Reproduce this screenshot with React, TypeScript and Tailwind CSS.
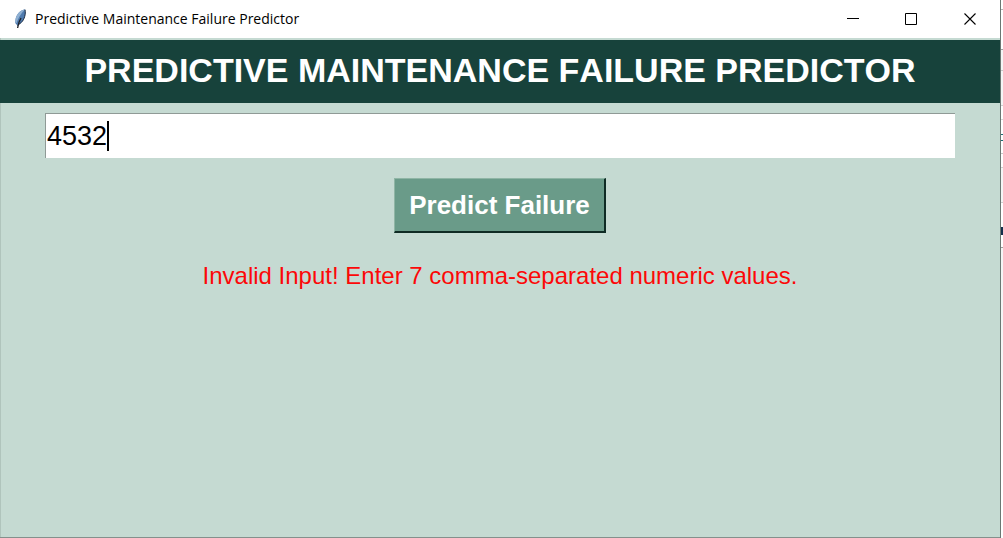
import { useState } from "react";

function FeatherIcon() {
  return (
    <svg width="13" height="20" viewBox="0 0 13 20" aria-hidden="true">
      <path d="M11 .6C7.200.6 3.200 4.400 1.800 9L1 13.800l2.600 3L7.400 13.400C10.800 10.400 12 5 11 .6Z" fill="#4f7baf" />
      <path d="M11 .6C7.200.6 3.200 4.400 1.800 9L1 13.800l1.600.2C4 9.600 7 4.400 11 .6Z" fill="#8fb0d2" />
      <path d="M11 .6c1 4.400-.6 9.800-3.600 12.800l-3.800 3" fill="none" stroke="#1b2a40" strokeWidth="1" />
      <path d="M7 9C5.400 11.600 4.400 14 3.600 19" fill="none" stroke="#1f2228" strokeWidth="1.400" />
    </svg>
  );
}

function TitleBar() {
  return (
    <div className="flex h-[38px] items-center justify-between bg-white">
      <div className="flex items-center gap-2 pl-[14px]">
        <FeatherIcon />
        <span className="font-['Open_Sans',sans-serif] text-sm text-black">
          Predictive Maintenance Failure Predictor
        </span>
      </div>
      <div className="flex h-full">
        <button type="button" aria-label="Minimize" className="flex w-[58px] items-center justify-center">
          <svg width="12" height="12" viewBox="0 0 12 12">
            <path d="M0 5.500h12" stroke="#000" />
          </svg>
        </button>
        <button type="button" aria-label="Maximize" className="flex w-[58px] items-center justify-center">
          <svg width="12" height="12" viewBox="0 0 12 12">
            <path d="M.5.5h11v11H.5z" fill="none" stroke="#000" />
          </svg>
        </button>
        <button type="button" aria-label="Close" className="flex w-[60px] items-center justify-center">
          <svg width="12" height="12" viewBox="0 0 12 12">
            <path d="M.5.5l11 11M11.500.5l-11 11" stroke="#000" strokeWidth="1.100" />
          </svg>
        </button>
      </div>
    </div>
  );
}

/* Sliver of the spreadsheet window that shows behind the right edge. */
function BackgroundSliver() {
  return (
    <div aria-hidden="true" className="flex w-[2px] shrink-0 flex-col bg-white">
      <div className="h-[10px] border-b border-[#b4b4b4]" />
      <div className="h-10 border-b border-[#a0a0a0]" />
      <div className="h-[21px] border-b border-[#c8c8c8] bg-[#f5f5f5]" />
      <div className="h-[35px] border-b border-[#d0d0d0] bg-[#f5f5f5]" />
      <div className="h-[14px] border-b border-[#d8d8d8]" />
      <div className="h-[15px] border-b border-[#1d6d75]" />
      <div className="h-[6px] border-b border-[#1d6d75]" />
      <div className="h-[13px] border-b border-[#c8c8c8]" />
      <div className="h-[14px] border-b border-[#d0d0d0]" />
      <div className="h-[35px] border-b border-[#d0d0d0] bg-[#f5f5f5]" />
      <div className="mt-6 h-2 bg-[#14304d]" />
      <div className="h-[13px] border-b border-[#a0a0a0]" />
      <div className="h-[152px] bg-[#f5f5f5]" />
    </div>
  );
}

export default function App() {
  const [value, setValue] = useState("4532");

  return (
    <div className="flex min-h-screen bg-white font-['Liberation_Sans',Arial,sans-serif] [font-kerning:none]">
      <div className="flex grow flex-col border-r border-[#6b7773]">
        <TitleBar />
        <main className="flex grow flex-col items-center border-b border-b-[#84908c] bg-[#c5dad2] pt-[2px] shadow-[inset_1px_0_0_#b0c4bc]">
          <h1 className="w-full bg-[#17423b] pt-[10px] pb-3 text-center text-[34px] leading-[41px] font-bold text-white">
            PREDICTIVE MAINTENANCE FAILURE PREDICTOR
          </h1>
          <div className="w-full px-[45px] pt-[10px]">
            <div className="relative text-[27px]">
              <input
                type="text"
                aria-label="Sensor values"
                value={value}
                onChange={(e) => setValue(e.target.value)}
                className="block h-[45px] w-full border-t border-l border-[#8f9a96] bg-white px-[1px] text-black caret-transparent outline-none"
              />
              <span
                aria-hidden="true"
                className="absolute top-2 ml-[2px] h-[30px] w-[2px] bg-black"
                style={{ left: `${value.length}ch` }}
              />
            </div>
          </div>
          <button
            type="button"
            className="mt-5 h-[55px] border-t border-r-2 border-b-2 border-l border-t-[#8fb5a5] border-r-[#0f2b24] border-b-[#0f2b24] border-l-[#8fb5a5] bg-[#6a9b89] px-[14px] text-[26px] font-bold text-white"
          >
            Predict Failure
          </button>
          <p role="alert" className="mt-[27px] text-2xl text-[#fc0808]">
            Invalid Input! Enter 7 comma-separated numeric values.
          </p>
        </main>
      </div>
      <BackgroundSliver />
    </div>
  );
}
